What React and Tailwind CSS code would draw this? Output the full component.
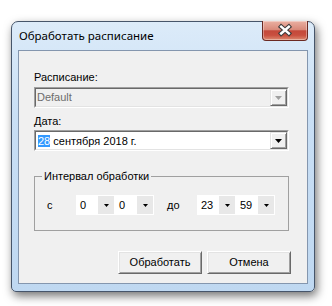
function Arrow({ color = "#000", w = 7, h = 4 }) {
  return (
    <svg width={w} height={h} viewBox={`0 0 ${w} ${h}`} className="block">
      <polygon points={`0,0 ${w},0 ${w / 2},${h}`} fill={color} />
    </svg>
  );
}

function ComboBtn({ disabled }) {
  return (
    <div className="w-[17px] h-full border border-t-[#e3e3e3] border-l-[#e3e3e3] border-r-[#696969] border-b-[#696969] bg-[#f0f0f0] shadow-[inset_1px_1px_0_#ffffff,inset_-1px_-1px_0_#a0a0a0] flex items-center justify-center">
      <Arrow color={disabled ? "#a0a0a0" : "#000"} />
    </div>
  );
}

function Combo({ disabled, children }) {
  return (
    <div className="w-[255px] h-[21px] border border-t-[#a0a0a0] border-l-[#a0a0a0] border-r-white border-b-white flex">
      <div
        className={
          "flex-1 flex border border-t-[#696969] border-l-[#696969] border-r-[#e3e3e3] border-b-[#e3e3e3] " +
          (disabled ? "bg-[#f0f0f0]" : "bg-white")
        }
      >
        <div className="flex-1 flex items-center pl-px">{children}</div>
        <ComboBtn disabled={disabled} />
      </div>
    </div>
  );
}

function Spin({ value }) {
  return (
    <div className="w-[39px] h-[20px] bg-white p-px flex">
      <span className="flex-1 pl-[3px] leading-[18px] text-black">{value}</span>
      <div className="w-[16px] bg-[#e8e8e8] flex items-center justify-center">
        <Arrow w={5} h={3} />
      </div>
    </div>
  );
}

function WinButton({ children }) {
  return (
    <div className="w-[84px] h-[23px] border border-t-white border-l-white border-r-[#696969] border-b-[#696969] bg-[#f0f0f0] shadow-[inset_1px_1px_0_#e3e3e3,inset_-1px_-1px_0_#a0a0a0] flex items-center justify-center text-black">
      {children}
    </div>
  );
}

function CloseButton() {
  return (
    <div className="-mt-px mr-[6px] w-[46px] h-[20px] rounded-b-[4px] border border-t-0 border-[#6b2a22] bg-[linear-gradient(180deg,#eab0a2_0%,#d98a7a_45%,#c4493a_52%,#c9503f_75%,#dd8a70_100%)] shadow-[inset_0_0_0_1px_rgba(255,255,255,0.35)] flex items-center justify-center">
      <svg width="46" height="20" viewBox="0 0 46 20" className="block">
        <g strokeLinecap="square">
          <path d="M19 5.5 L27 12.5 M27 5.5 L19 12.5" stroke="#3b3b3b" strokeWidth="4.8" fill="none" />
          <path d="M19 5.5 L27 12.5 M27 5.5 L19 12.5" stroke="#ffffff" strokeWidth="2.6" fill="none" />
        </g>
      </svg>
    </div>
  );
}

export default function App() {
  return (
    <div className="w-[332px] h-[306px] bg-white pt-[21px] pl-[11px] overflow-hidden">
      <div className="w-[304px] h-[271px] flex flex-col rounded-t-[7px] rounded-b-[5px] border border-[#46556a] bg-[linear-gradient(180deg,#dcebf9_0%,#c9dff5_35%,#bfd8f1_100%)] shadow-[2px_4px_10px_rgba(0,0,0,0.55)]">
        <div className="h-[28px] flex items-start shrink-0">
          <div className="flex-1 pl-[7px] pt-[6px] font-['Noto_Sans',sans-serif] text-[11.5px] leading-[16px] text-black">
            Обработать расписание
          </div>
          <CloseButton />
        </div>
        <div className="mx-[6px] mb-[7px] flex-1 border border-[#8496ae] bg-[#f0f0f0] pl-[15px] font-['Liberation_Sans',Arial,sans-serif] text-[11px] text-black">
          <div className="mt-[20px] leading-[13px]">Расписание:</div>
          <div className="mt-[3px]">
            <Combo disabled>
              <span className="text-[#6d6d6d] leading-[15px]">Default</span>
            </Combo>
          </div>
          <div className="mt-[7px] leading-[13px]">Дата:</div>
          <div className="mt-[2px]">
            <Combo>
              <span className="pl-px leading-[14px]">
                <span className="bg-[#3399ff] text-white">28</span> сентября 2018 г.
              </span>
            </Combo>
          </div>
          <fieldset className="mt-[19px] w-[255px] border border-[#a0a0a0] p-0 m-0 min-w-0">
            <legend className="ml-[7px] px-[2px] leading-[13px]">Интервал обработки</legend>
            <div className="mt-[12px] mb-[15px] h-[20px] flex items-center pl-[12px]">
              <span className="w-[29px] leading-[20px]">с</span>
              <Spin value="0" />
              <Spin value="0" />
              <span className="w-[43px] pl-[13px] leading-[20px]">до</span>
              <Spin value="23" />
              <Spin value="59" />
            </div>
          </fieldset>
          <div className="mt-[20px] w-[257px] flex justify-end gap-[5px]">
            <WinButton>Обработать</WinButton>
            <WinButton>Отмена</WinButton>
          </div>
        </div>
      </div>
    </div>
  );
}
